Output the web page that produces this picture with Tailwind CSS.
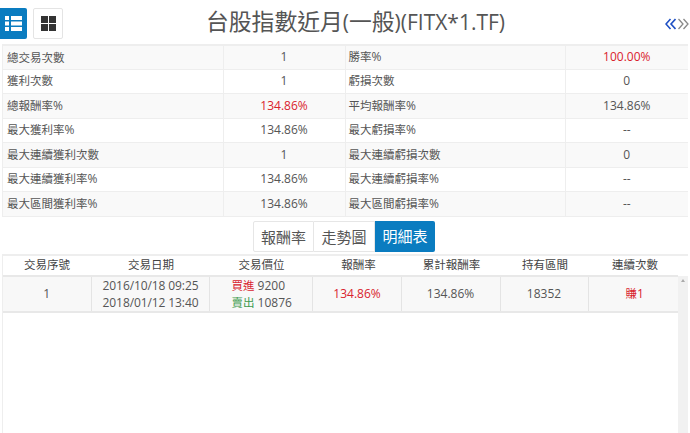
<!DOCTYPE html>
<html><head><meta charset="utf-8"><script src="https://cdn.jsdelivr.net/npm/@tailwindcss/browser@4"></script></head>
<body class="bg-white">
<div class="w-[690px] h-[433px] overflow-hidden relative font-['Open_Sans','Noto_Sans_CJK_TC',sans-serif] text-[#555] text-[12px]">
  <header class="h-[44px] flex items-start relative">
    <div class="flex gap-[6px] pt-[8px]">
      <button class="w-[27px] h-[31px] bg-[#0a7cc0] rounded-r-[2px] flex items-center justify-center">
        <svg width="17" height="15" viewBox="0 0 17 15" fill="#fff"><rect x="0" y="0" width="4" height="4"/><rect x="6" y="0" width="11" height="4"/><rect x="0" y="5.5" width="4" height="4"/><rect x="6" y="5.5" width="11" height="4"/><rect x="0" y="11" width="4" height="4"/><rect x="6" y="11" width="11" height="4"/></svg>
      </button>
      <button class="w-[30px] h-[31px] bg-white border border-[#e4e4e4] rounded-[2px] flex items-center justify-center">
        <svg width="15" height="15" viewBox="0 0 15 15" fill="#333"><rect width="7" height="7"/><rect x="8" width="7" height="7"/><rect y="8" width="7" height="7"/><rect x="8" y="8" width="7" height="7"/></svg>
      </button>
    </div>
    <h1 class="absolute left-[206px] top-[5px] text-[21px] leading-[33px] text-[#555] font-normal whitespace-nowrap"><span class="text-[22.8px]">台股指數近月</span>(<span class="text-[22.8px]">一般</span>)(FITX*1.TF)</h1>
    <div class="absolute left-[665px] top-[18px] flex gap-[2px]">
      <svg width="11" height="12" viewBox="0 0 11 12" fill="none" stroke="#1d4fc4" stroke-width="1.6"><path d="M5.5 1 1 6l4.500 5M10.500 1 6 6l4.500 5"/></svg>
      <svg width="11" height="12" viewBox="0 0 11 12" fill="none" stroke="#888" stroke-width="1.3"><path d="M.5 1 5 6 .5 11M5.500 1 10 6l-4.500 5"/></svg>
    </div>
  </header>

  <div class="ml-[2px] w-[686px] border-l border-[#eee]">
  <table class="w-[685px] table-fixed border-collapse border-t-2 border-[#eee]">
    <colgroup><col class="w-[220px]"><col class="w-[122px]"><col class="w-[220px]"><col class="w-[123px]"></colgroup>
    <tbody>
      <tr class="h-[24px] bg-[#f9f9f9] border-b border-[#eee]"><td class="pl-[4px] text-[11.5px]">總交易次數</td><td class="text-center border-l border-[#eee]">1</td><td class="pl-[3px] border-l border-[#eee] text-[11.5px]">勝率<span class="text-[12px]">%</span></td><td class="text-center border-l border-[#eee] text-[#d9232e]">100.00%</td></tr>
      <tr class="h-[24px] border-b border-[#eee]"><td class="pl-[4px] text-[11.5px]">獲利次數</td><td class="text-center border-l border-[#eee]">1</td><td class="pl-[3px] border-l border-[#eee] text-[11.5px]">虧損次數</td><td class="text-center border-l border-[#eee]">0</td></tr>
      <tr class="h-[25px] bg-[#f9f9f9] border-b border-[#eee]"><td class="pl-[4px] text-[11.5px]">總報酬率<span class="text-[12px]">%</span></td><td class="text-center border-l border-[#eee] text-[#d9232e]">134.86%</td><td class="pl-[3px] border-l border-[#eee] text-[11.5px]">平均報酬率<span class="text-[12px]">%</span></td><td class="text-center border-l border-[#eee]">134.86%</td></tr>
      <tr class="h-[24px] border-b border-[#eee]"><td class="pl-[4px] text-[11.5px]">最大獲利率<span class="text-[12px]">%</span></td><td class="text-center border-l border-[#eee]">134.86%</td><td class="pl-[3px] border-l border-[#eee] text-[11.5px]">最大虧損率<span class="text-[12px]">%</span></td><td class="text-center border-l border-[#eee]">--</td></tr>
      <tr class="h-[25px] bg-[#f9f9f9] border-b border-[#eee]"><td class="pl-[4px] text-[11.5px]">最大連續獲利次數</td><td class="text-center border-l border-[#eee]">1</td><td class="pl-[3px] border-l border-[#eee] text-[11.5px]">最大連續虧損次數</td><td class="text-center border-l border-[#eee]">0</td></tr>
      <tr class="h-[24px] border-b border-[#eee]"><td class="pl-[4px] text-[11.5px]">最大連續獲利率<span class="text-[12px]">%</span></td><td class="text-center border-l border-[#eee]">134.86%</td><td class="pl-[3px] border-l border-[#eee] text-[11.5px]">最大連續虧損率<span class="text-[12px]">%</span></td><td class="text-center border-l border-[#eee]">--</td></tr>
      <tr class="h-[25px] bg-[#f9f9f9] border-b border-[#eee]"><td class="pl-[4px] text-[11.5px]">最大區間獲利率<span class="text-[12px]">%</span></td><td class="text-center border-l border-[#eee]">134.86%</td><td class="pl-[3px] border-l border-[#eee] text-[11.5px]">最大區間虧損率<span class="text-[12px]">%</span></td><td class="text-center border-l border-[#eee]">--</td></tr>
    </tbody>
  </table>
  </div>

  <div class="flex justify-center mt-[4px] ml-[-2px] text-[15px] leading-[30px]">
    <span class="w-[61px] h-[31px] text-center border border-[#e6e6e6] rounded-l-[2px]">報酬率</span>
    <span class="w-[61px] h-[31px] text-center border border-[#e6e6e6] border-l-0">走勢圖</span>
    <span class="w-[60px] h-[31px] text-center bg-[#0a7cc0] text-white rounded-r-[2px]">明細表</span>
  </div>

  <div class="mt-[2px] ml-[2px] w-[686px] h-[181px] border-t-2 border-l border-[#eee] relative">
    <table class="w-[675px] table-fixed border-collapse">
      <colgroup><col class="w-[88px]"><col class="w-[118px]"><col class="w-[103px]"><col class="w-[89px]"><col class="w-[99px]"><col class="w-[88px]"><col class="w-[90px]"></colgroup>
      <thead><tr class="h-[20px] border-b-2 border-[#e8e8e8] text-center text-[#444] text-[11.5px]"><th class="font-normal">交易序號</th><th class="font-normal pl-[2px]">交易日期</th><th class="font-normal pl-[2px]">交易價位</th><th class="font-normal pl-[4px]">報酬率</th><th class="font-normal pl-[2px]">累計報酬率</th><th class="font-normal pl-[2px]">持有區間</th><th class="font-normal pl-[4px]">連續次數</th></tr></thead>
      <tbody><tr class="h-[35px] bg-[#f8f8f8] border-b-2 border-[#e8e8e8] text-center leading-[17px]">
        <td>1</td>
        <td class="border-l border-[#e4e4e4] tracking-[-0.1px] pl-[1px]">2016/10/18 09:25<br>2018/01/12 13:40</td>
        <td class="border-l border-[#e4e4e4] text-left pl-[22px]"><span class="text-[#d9232e] text-[11.5px]">買進</span> 9200<br><span class="text-[#3f9b4f] text-[11.5px]">賣出</span> 10876</td>
        <td class="border-l border-[#e4e4e4] text-[#d9232e] pl-[1px]">134.86%</td>
        <td class="border-l border-[#e4e4e4]">134.86%</td>
        <td class="border-l border-[#e4e4e4]">18352</td>
        <td class="border-l border-[#e4e4e4] text-[#d9232e] pl-[3px]"><span class="text-[11.5px]">賺</span>1</td>
      </tr></tbody>
    </table>
    <div class="absolute right-0 top-[20px] bottom-0 w-[10px] bg-[#f1f1f1] flex justify-center pt-[3px]"><svg width="4" height="3" viewBox="0 0 4 3" fill="#aaa"><path d="M2 0l2 3H0z"/></svg></div>
  </div>
</div>
</body></html>
